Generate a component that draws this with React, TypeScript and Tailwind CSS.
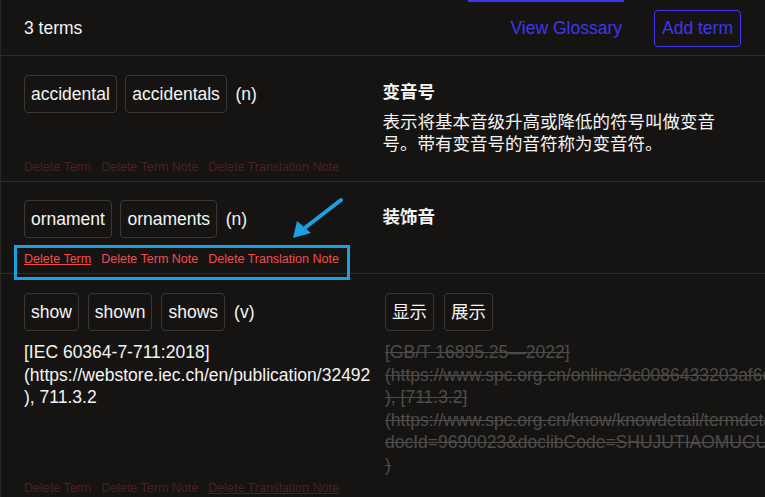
const Chip = ({ label }: { label: string }) => (
  <span className="rounded-[4px] border border-[#3a3734] px-[6px] py-[7px] leading-[22px]">
    {label}
  </span>
);

const DeleteLinks = ({
  bright,
  underline,
}: {
  bright?: boolean;
  underline: 'term' | 'translation' | null;
}) => (
  <div
    className={
      'flex gap-[10px] text-[12.5px] leading-4 ' +
      (bright ? 'text-[#f24d4d]' : 'text-[#4a2020]')
    }
  >
    <span className={underline === 'term' ? 'underline' : ''}>Delete Term</span>
    <span>Delete Term Note</span>
    <span className={underline === 'translation' ? 'underline' : ''}>
      Delete Translation Note
    </span>
  </div>
);

const App = () => {
  return (
    <div className="relative h-[497px] w-[765px] overflow-hidden border-l border-[#2b2927] bg-[#161412] font-['Liberation_Sans','Noto_Sans_CJK_SC',Arial,sans-serif] text-[17.5px] leading-[22.5px] text-[#f4f4f4]">
      {/* active tab indicator from the bar above */}
      <div className="absolute left-[467px] top-0 h-[2px] w-[156px] bg-[#4036f0]" />

      {/* Header */}
      <div className="flex h-[56px] items-center justify-between border-b border-[#2e2c2a] pl-[23px] pr-6 pt-[2px]">
        <span>3 terms</span>
        <div className="flex items-center gap-[32px]">
          <span className="text-[#4036f0]">View Glossary</span>
          <span className="rounded-[4px] border border-[#4036f0] px-[7px] py-[7px] leading-[21px] text-[#4036f0]">
            Add term
          </span>
        </div>
      </div>

      {/* accidental */}
      <div className="border-b border-[#2e2c2a] pb-[6px] pl-[23px] pr-6 pt-[19px]">
        <div className="grid grid-cols-2 items-start">
          <div className="flex items-center gap-[8.5px]">
            <Chip label="accidental" />
            <Chip label="accidentals" />
            <span>(n)</span>
          </div>
          <div className="pt-[6px]">
            <div className="font-bold">变音号</div>
            <div className="mt-[7px]">
              表示将基本音级升高或降低的符号叫做变音
              <br />
              号。带有变音号的音符称为变音符。
            </div>
          </div>
        </div>
        <div className="mt-[3.5px]">
          <DeleteLinks underline={null} />
        </div>
      </div>

      {/* ornament */}
      <div className="border-b border-[#2e2c2a] pb-[6px] pl-[23px] pr-6 pt-[18px]">
        <div className="grid grid-cols-2 items-start">
          <div className="flex items-center gap-[8.5px]">
            <Chip label="ornament" />
            <Chip label="ornaments" />
            <span>(n)</span>
          </div>
          <div className="pt-[6px]">
            <div className="font-bold">装饰音</div>
          </div>
        </div>
        <div className="mt-[13px]">
          <DeleteLinks bright underline="term" />
        </div>
      </div>

      {/* show */}
      <div className="pl-[23px] pr-6 pt-[19px]">
        <div className="grid grid-cols-2 items-start">
          <div>
            <div className="flex items-center gap-[9px]">
              <Chip label="show" />
              <Chip label="shown" />
              <Chip label="shows" />
              <span>(v)</span>
            </div>
            <div className="mt-[10px] whitespace-nowrap">
              [IEC 60364-7-711:2018]
              <br />
              (https://webstore.iec.ch/en/publication/32492
              <br />
              ), 711.3.2
            </div>
          </div>
          <div className="min-w-0 pl-[2.5px]">
            <div className="flex items-center gap-[10px]">
              <Chip label="显示" />
              <Chip label="展示" />
            </div>
            <div className="mt-[10px] whitespace-nowrap text-[#4e4c4a] line-through">
              [GB/T 16895.25—2022]
              <br />
              (https://www.spc.org.cn/online/3c0086433203af6e1b5d8c
              <br />
              ), [711.3.2]
              <br />
              (https://www.spc.org.cn/know/knowdetail/termdetail?
              <br />
              docId=9690023&amp;doclibCode=SHUJUTIAOMUGUANLI
              <br />)
            </div>
          </div>
        </div>
        <div className="mt-[4px]">
          <DeleteLinks underline="translation" />
        </div>
      </div>

      {/* annotation overlay */}
      <div className="absolute left-[13px] top-[245px] h-[35px] w-[336px] border-[3px] border-[#1ca0e0]" />
      <svg
        className="absolute left-[285px] top-[194px]"
        width="62"
        height="50"
        viewBox="0 0 62 50"
      >
        <line x1="55" y1="6" x2="20" y2="33" stroke="#1ca0e0" strokeWidth="4" strokeLinecap="round" />
        <polygon points="7,44 11,27 25,39" fill="#1ca0e0" />
      </svg>
    </div>
  );
};

export default App;
